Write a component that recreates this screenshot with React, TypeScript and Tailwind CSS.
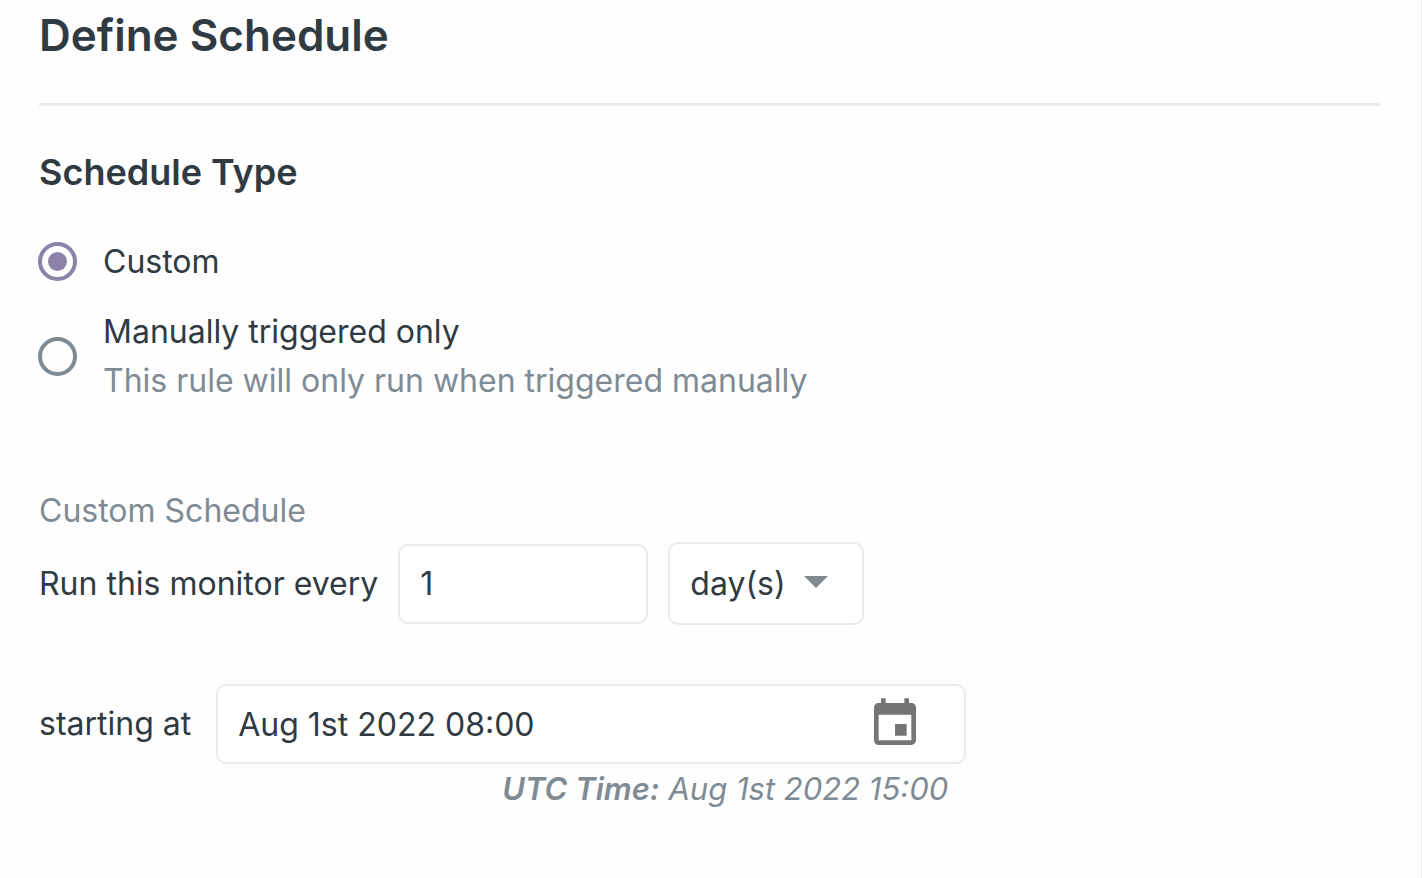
import { useState } from "react";
import { MdEvent } from "react-icons/md";

const radioClass =
  "flex size-[39px] shrink-0 appearance-none items-center justify-center rounded-full border-4 border-[#7f8b94] checked:border-[#8d82a8] checked:before:size-[19px] checked:before:rounded-full checked:before:bg-[#8d82a8] checked:before:content-['']";

const fieldClass =
  "rounded-[10px] border-2 border-[#e8ecf0] bg-white text-[#303a42] outline-none";

export default function App() {
  const [type, setType] = useState("custom");
  const [count, setCount] = useState("1");
  const [unit, setUnit] = useState("day");
  const [start, setStart] = useState("Aug 1st 2022 08:00");

  return (
    <main className="min-h-screen border-r border-[#ebebeb] bg-[#fefefe] pt-[7px] pr-[41px] pl-[39px] font-['Inter',sans-serif] text-[32px] leading-[49px] text-[#303a42]">
      <h1 className="text-[44px] leading-[56px] font-semibold">Define Schedule</h1>
      <hr className="mt-10 border-t-[3px] border-[#e9ebee]" />

      <fieldset className="mt-[42px]">
        <legend className="text-[36px] leading-[48px] font-semibold">Schedule Type</legend>
        <div className="-ml-px flex flex-col gap-[21px] pt-[41px]">
          <label className="flex items-center gap-[26px]">
            <input
              type="radio"
              name="schedule-type"
              className={radioClass}
              checked={type === "custom"}
              onChange={() => setType("custom")}
            />
            <span>Custom</span>
          </label>
          <label className="flex items-center gap-[26px]">
            <input
              type="radio"
              name="schedule-type"
              className={radioClass}
              checked={type === "manual"}
              onChange={() => setType("manual")}
            />
            <span>
              <span className="block">Manually triggered only</span>
              <span className="block text-[#7f8b94]">
                This rule will only run when triggered manually
              </span>
            </span>
          </label>
        </div>
      </fieldset>

      <section className="mt-[81px]">
        <h2 className="text-[#7f8b94]">Custom Schedule</h2>
        <div className="mt-[7px] flex items-center gap-5">
          <label htmlFor="count">Run this monitor every</label>
          <input
            id="count"
            type="text"
            inputMode="numeric"
            className={`${fieldClass} h-20 w-[250px] px-5`}
            value={count}
            onChange={(e) => setCount(e.target.value)}
          />
          <div className="relative">
            <select
              aria-label="Interval unit"
              className={`${fieldClass} block h-[83px] w-[196px] appearance-none pl-5`}
              value={unit}
              onChange={(e) => setUnit(e.target.value)}
            >
              <option value="hour">hour(s)</option>
              <option value="day">day(s)</option>
              <option value="week">week(s)</option>
            </select>
            <svg
              viewBox="0 0 24 12"
              className="pointer-events-none absolute top-[34px] right-9 h-3 w-6 fill-[#7f8b94]"
              aria-hidden="true"
            >
              <path d="M0 0h24L12 12z" />
            </svg>
          </div>
        </div>

        <div className="mt-[59px] flex items-start gap-[25px]">
          <label htmlFor="start" className="leading-[80px]">
            starting at
          </label>
          <div className="w-[750px]">
            <div className={`${fieldClass} flex h-20 items-center pr-[41px] pl-5`}>
              <input
                id="start"
                type="text"
                className="min-w-0 flex-1 bg-transparent outline-none"
                value={start}
                onChange={(e) => setStart(e.target.value)}
              />
              <button type="button" aria-label="Choose date" className="text-[#757575]">
                <MdEvent className="size-14" />
              </button>
            </div>
            <p className="pr-[18px] text-right text-[31px] text-[#7f8b94] italic">
              <strong className="font-semibold">UTC Time:</strong> Aug 1st 2022 15:00
            </p>
          </div>
        </div>
      </section>
    </main>
  );
}
